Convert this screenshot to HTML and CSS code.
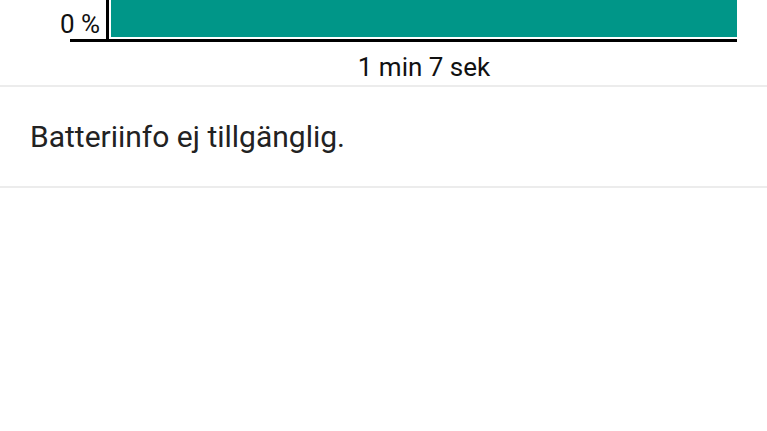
FILE: index.html
```html
<!DOCTYPE html>
<html lang="sv">
<head>
<meta charset="utf-8">
<title>Batteri</title>
<link rel="stylesheet" href="styles.css">
</head>
<body>
<section class="chart">
  <div class="plot">
    <div class="ylabel">0 %</div>
    <div class="yaxis"></div>
    <div class="bar"></div>
  </div>
  <div class="xaxis"></div>
  <div class="xlabel">1 min 7 sek</div>
</section>
<div class="divider"></div>
<div class="item">Batteriinfo ej tillgänglig.</div>
<div class="divider"></div>
</body>
</html>
```
FILE: styles.css
```css
html, body {
  margin: 0;
  padding: 0;
  background: #ffffff;
  font-family: Roboto, "Liberation Sans", sans-serif;
}
.chart {
  height: 85px;
}
.plot {
  display: grid;
  grid-template-columns: 106px 5px 626px;
  height: 39px;
}
.ylabel {
  font-size: 26px;
  line-height: 30px;
  color: #111;
  text-align: right;
  padding-right: 6px;
  align-self: end;
  margin-bottom: 0;
}
.yaxis {
  background: #000;
  width: 3px;
}
.bar {
  background: #009688;
  height: 37px;
}
.xaxis {
  margin-left: 70px;
  width: 667px;
  height: 3px;
  background: #000;
}
.xlabel {
  margin-left: 111px;
  width: 626px;
  text-align: center;
  font-size: 26px;
  line-height: 30px;
  color: #111;
  padding-top: 10px;
}
.divider {
  height: 2px;
  background: #ececec;
}
.item {
  height: 99px;
  display: flex;
  align-items: center;
  padding-left: 30px;
  font-size: 30px;
  color: #222;
}
```
